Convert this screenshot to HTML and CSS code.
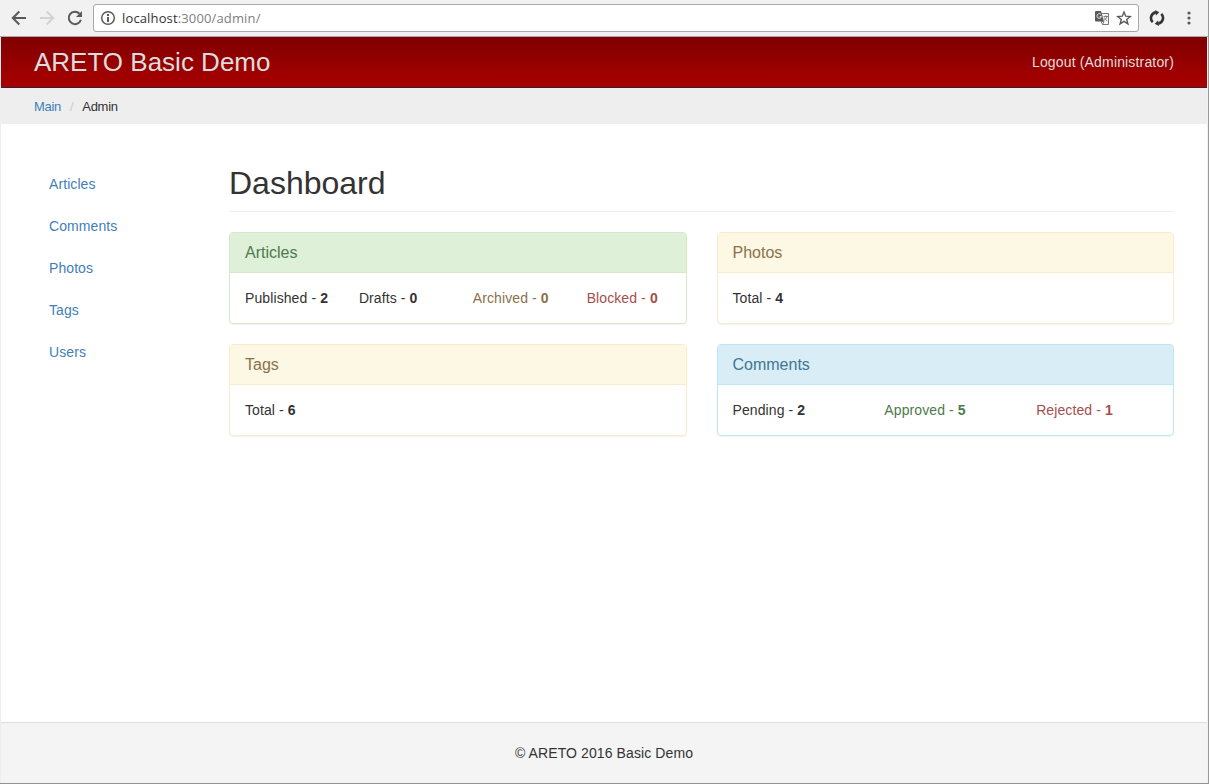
FILE: index.html
```html
<!DOCTYPE html>
<html lang="en">
<head>
<meta charset="utf-8">
<title>Dashboard</title>
<link rel="stylesheet" href="styles.css">
</head>
<body>
<div class="window">
  <div class="toolbar">
    <svg class="tool back" width="16" height="16" viewBox="0 0 16 16"><path d="M15 8H2M8.300 1.500L1.800 8l6.500 6.500" fill="none" stroke="#5a5a5a" stroke-width="2"/></svg>
    <svg class="tool forward" width="16" height="16" viewBox="0 0 16 16"><path d="M1 8h13M7.700 1.500L14.200 8l-6.500 6.500" fill="none" stroke="#d2d2d2" stroke-width="2"/></svg>
    <svg class="tool reload" width="16" height="16" viewBox="0 0 16 16"><path d="M13.900 9.800A6.200 6.200 0 1 1 12.500 3.700" fill="none" stroke="#5a5a5a" stroke-width="2"/><path d="M15 1v6H9z" fill="#5a5a5a"/></svg>
    <div class="address">
      <svg class="info" width="16" height="16" viewBox="0 0 16 16"><circle cx="8" cy="8" r="6.300" fill="none" stroke="#5a5a5a" stroke-width="1.500"/><path d="M7 4h2v2H7zM7 7h2v5H7z" fill="#5a5a5a"/></svg>
      <span class="url">localhost<span class="path">:3000/admin/</span></span>
      <svg class="translate" width="14" height="14" viewBox="0 0 14 14"><path d="M5 2.500h8.500v11H7.500" fill="#f7f7f7" stroke="#777"/><path d="M0 1q0-1 1-1h5l3 10.500H1q-1 0-1-1z" fill="#5a5a5a"/><path d="M6.200 3.700A2.300 2.300 0 1 0 6.500 5.700H4.500" fill="none" stroke="#eee"/><path d="M8.500 5.500H13M10.700 4.500v1M12 5.500Q11.500 8 8.800 9.500M9.300 6.500q.8 2 3 3.500M6 10.500h3l-1.500 3z" fill="none" stroke="#777" stroke-width=".9"/></svg>
      <svg class="star" width="16" height="16" viewBox="0 0 16 16"><path d="M8 2l1.700 4.200 4.500.3-3.500 2.900 1.200 4.500L8 11.400l-3.900 2.500 1.200-4.500-3.500-2.900 4.500-.3z" fill="none" stroke="#5a5a5a" stroke-width="1.400"/></svg>
    </div>
    <svg class="sync" width="16" height="16" viewBox="0 0 16 16"><path d="M3.700 12.200A5.800 5.800 0 0 1 6.700 2.400M12.300 3.800A5.800 5.800 0 0 1 9.300 13.600" fill="none" stroke="#333" stroke-width="2.600"/><path d="M6 0l4.200 2.200L7 5.600zM10 16l-4.200-2.200L9 10.400z" fill="#333"/></svg>
    <svg class="menu" width="4" height="14" viewBox="0 0 4 14"><g fill="#5a5a5a"><circle cx="2" cy="2" r="1.600"/><circle cx="2" cy="7" r="1.600"/><circle cx="2" cy="12" r="1.600"/></g></svg>
  </div>
  <div class="page">
    <header class="navbar"><a class="brand">ARETO Basic Demo</a><a class="logout">Logout (Administrator)</a></header>
    <nav class="breadcrumb"><a class="crumb">Main</a><span class="slash">/</span><span>Admin</span></nav>
    <div class="content">
      <nav class="sidebar"><a>Articles</a><a>Comments</a><a>Photos</a><a>Tags</a><a>Users</a></nav>
      <main class="main">
        <h1 class="title">Dashboard</h1>
        <div class="panels">
          <section class="panel success"><h3 class="heading">Articles</h3><div class="stats four"><span>Published - <b>2</b></span><span>Drafts - <b>0</b></span><span class="brown">Archived - <b>0</b></span><span class="red">Blocked - <b>0</b></span></div></section>
          <section class="panel warning"><h3 class="heading">Photos</h3><div class="stats"><span>Total - <b>4</b></span></div></section>
          <section class="panel warning"><h3 class="heading">Tags</h3><div class="stats"><span>Total - <b>6</b></span></div></section>
          <section class="panel info-panel"><h3 class="heading">Comments</h3><div class="stats three"><span>Pending - <b>2</b></span><span class="green">Approved - <b>5</b></span><span class="red">Rejected - <b>1</b></span></div></section>
        </div>
      </main>
    </div>
    <footer class="footer">© ARETO 2016 Basic Demo</footer>
  </div>
</div>
</body>
</html>
```
FILE: styles.css
```css
* { box-sizing: border-box; }
body { margin: 0; font: 14px/20px "Liberation Sans", Arial, sans-serif; color: #333; background: #fff; }
.window { width: 1209px; height: 784px; display: flex; flex-direction: column; border-right: 1px solid #999; border-bottom: 1px solid #929292; overflow: hidden; }
svg { display: block; flex: none; }
.toolbar { height: 37px; flex: none; display: flex; align-items: center; padding: 0 17px 1px 11px; background: #f1f1f1; border-bottom: 1px solid #a9a9a9; }
.forward { margin-left: 12px; }
.reload { margin-left: 12px; }
.address { width: 1046px; height: 28px; margin-left: 10px; display: flex; align-items: center; padding: 0 6px; background: #fff; border: 1px solid #a9a9a9; border-radius: 3px; }
.url { margin-left: 6px; flex: 1; font: 13px/18px "Open Sans", sans-serif; letter-spacing: .14px; color: #333; }
.path { color: #808080; }
.star { margin-left: 7px; }
.sync { margin-left: 10px; }
.menu { margin-left: auto; }
.page { flex: 1; display: flex; flex-direction: column; border-left: 1px solid #eee; border-right: 1px solid #f1f1f1; }
.navbar { height: 51px; flex: none; display: flex; justify-content: space-between; align-items: center; padding: 0 33px; color: #ddd; background: linear-gradient(#800000, #aa0000); border-bottom: 1px solid #302038; }
.brand { font-size: 26px; line-height: 30px; }
.logout { letter-spacing: .16px; }
.breadcrumb { height: 36px; flex: none; display: flex; align-items: center; padding: 1px 33px 0; background: #eee; font-size: 13px; letter-spacing: -.3px; }
.crumb, .sidebar { color: #427fb8; }
.slash { color: #ccc; margin: 0 9px; }
.content { flex: 1; display: flex; padding: 40px 33px 0; }
.sidebar { width: 195px; display: flex; flex-direction: column; gap: 2px; letter-spacing: .08px; }
.sidebar a { padding: 10px 15px; }
.main { flex: 1; }
.title { margin: 0 0 20px; height: 48px; font-size: 32px; line-height: 38px; font-weight: 400; border-bottom: 1px solid #eee; }
.panels { display: grid; grid-template-columns: 1fr 1fr; gap: 20px 30px; }
.panel { height: 92px; border: 1px solid; border-radius: 4px; box-shadow: 0 1px 1px rgba(0,0,0,.05); overflow: hidden; }
.heading { margin: 0; height: 40px; padding: 11px 15px 9px; font-size: 16px; line-height: 18px; font-weight: 400; border-bottom: 1px solid; border-color: inherit; }
.stats { display: grid; padding: 15px 0 15px 15px; letter-spacing: .1px; }
.four { grid-template-columns: repeat(4, 1fr); margin-right: -15px; }
.three { grid-template-columns: repeat(3, 1fr); margin-right: -15px; }
.success { border-color: #d6e9c6; }
.success .heading { color: #4c7a4d; background: #dff0d8; }
.warning { border-color: #faebcc; }
.warning .heading { color: #8a714b; background: #fcf8e3; }
.info-panel { border-color: #bce8f1; }
.info-panel .heading { color: #407692; background: #d9edf7; }
.brown { color: #8a714b; }
.red { color: #a44e4c; }
.green { color: #4c7a4d; }
.footer { height: 61px; flex: none; padding-top: 20px; text-align: center; letter-spacing: .1px; background: #f4f4f4; border-top: 1px solid #ddd; }
```
